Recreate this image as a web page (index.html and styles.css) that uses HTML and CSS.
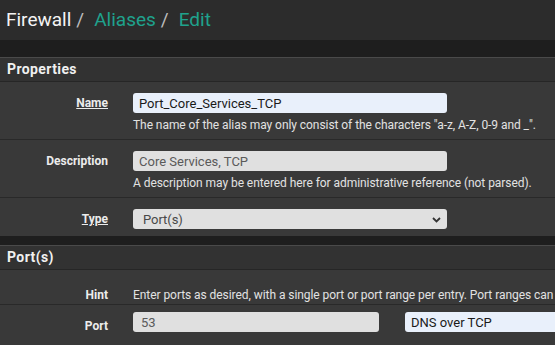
FILE: index.html
```html
<!DOCTYPE html>
<html>
<head>
<meta charset="utf-8">
<link rel="stylesheet" href="styles.css">
</head>
<body>
<header class="page-header">
  <h1 class="crumbs"><span class="crumb">Firewall</span><span class="sep">/</span><a class="crumb link">Aliases</a><span class="sep">/</span><a class="crumb link">Edit</a></h1>
</header>
<div class="band"></div>
<section class="panel">
  <div class="panel-heading">Properties</div>
  <div class="row">
    <label class="label ul">Name</label>
    <div class="field">
      <input class="input autofill" type="text" value="Port_Core_Services_TCP">
      <div class="help">The name of the alias may only consist of the characters "a-z, A-Z, 0-9 and _".</div>
    </div>
  </div>
  <div class="row">
    <label class="label">Description</label>
    <div class="field">
      <input class="input grey" type="text" value="Core Services, TCP">
      <div class="help">A description may be entered here for administrative reference (not parsed).</div>
    </div>
  </div>
  <div class="row row-short">
    <label class="label ul">Type</label>
    <div class="field">
      <div class="select"><span>Port(s)</span><svg class="chev" width="9" height="6" viewBox="0 0 9 6"><path d="M1 1 L4.5 4.5 L8 1" fill="none" stroke="#333" stroke-width="1.8"/></svg></div>
    </div>
  </div>
</section>
<div class="gap"></div>
<section class="panel">
  <div class="panel-heading">Port(s)</div>
  <div class="row row-hint">
    <label class="label">Hint</label>
    <div class="field nowrap">Enter ports as desired, with a single port or port range per entry. Port ranges can</div>
  </div>
  <div class="row row-port">
    <label class="label">Port</label>
    <div class="field pair">
      <input class="input grey small" type="text" value="53">
      <input class="input autofill dns" type="text" value="DNS over TCP">
    </div>
  </div>
</section>
</body>
</html>
```
FILE: styles.css
```css
html, body {
  margin: 0;
  padding: 0;
  width: 555px;
  height: 345px;
  overflow: hidden;
  background: #393939;
  font-family: Roboto, "Liberation Sans", sans-serif;
}
.page-header {
  background: #2c2c2c;
  height: 40px;
  box-sizing: border-box;
  padding: 9px 0 0 6px;
}
.crumbs {
  margin: 0;
  font-size: 19px;
  font-weight: 400;
  line-height: 22px;
  color: #f4f4f4;
  white-space: nowrap;
}
.sep {
  color: #bdbdbd;
  margin: 0 10px 0 5px;
}
.link { color: #1fa28d; }
.band {
  height: 17px;
  background: #1e1e1e;
}
.gap {
  height: 9px;
  background: #1e1e1e;
}
.panel {
  background: #393939;
  border-top: 1px solid #4a4a4a;
}
.panel-heading {
  background: #323232;
  height: 23px;
  line-height: 23px;
  padding-left: 7px;
  font-size: 14px;
  font-weight: 700;
  letter-spacing: 0.4px;
  color: #f0f0f0;
  border-bottom: 1px solid #262626;
}
.row {
  display: flex;
  align-items: flex-start;
  padding: 11px 0 6px;
  border-bottom: 1px solid #292929;
}
.row-short { padding: 11px 0 7px; border-bottom: none; }
.row-hint { padding: 17px 0 1px; }
.row-port { padding: 7px 0 10px; border-bottom: none; }
.label {
  width: 108px;
  flex: none;
  text-align: right;
  font-size: 12px;
  font-weight: 700;
  color: #ececec;
  line-height: 20px;
  margin-right: 25px;
}
.row-hint .label { line-height: 16px; }
.row-port .label { line-height: 28px; }
.ul { text-decoration: underline; }
.field {
  flex: 1;
  min-width: 0;
  font-size: 12px;
  letter-spacing: -0.06px;
  color: #e2e2e2;
}
.nowrap {
  white-space: nowrap;
  overflow: hidden;
  line-height: 16px;
}
.input {
  display: block;
  box-sizing: border-box;
  width: 314px;
  height: 20px;
  margin: 0;
  border: none;
  border-radius: 3px;
  padding: 0 6px;
  font-family: Roboto, "Liberation Sans", sans-serif;
  font-size: 13px;
  outline: none;
}
.autofill { background: #e9f0fb; color: #1a1a1a; }
.grey { background: #e0e0e0; color: #5a5a5a; }
.help {
  margin-top: 5px;
  line-height: 15px;
  white-space: nowrap;
}
.select {
  box-sizing: border-box;
  width: 314px;
  height: 20px;
  border-radius: 3px;
  background: #e0e0e0;
  color: #484848;
  font-size: 13px;
  display: flex;
  align-items: center;
  justify-content: space-between;
  padding: 0 6px 0 10px;
}
.chev { display: block; margin-top: 1px; }
.pair {
  display: flex;
  gap: 26px;
}
.small { width: 246px; flex: none; padding-left: 8px; }
.dns { width: 246px; flex: none; }
```
